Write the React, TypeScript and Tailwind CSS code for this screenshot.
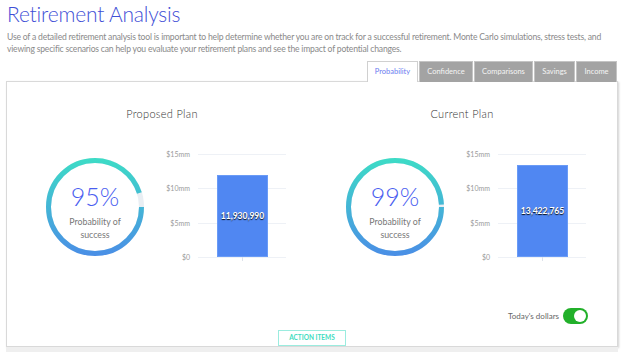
import React from "react";

const TABS = [
  { label: "Probability", w: "w-[51px]", active: true },
  { label: "Confidence", w: "w-[54px]", active: false },
  { label: "Comparisons", w: "w-[59px]", active: false },
  { label: "Savings", w: "w-[41px]", active: false },
  { label: "Income", w: "w-[41px]", active: false },
];

const GRID = [
  { label: "$15mm", top: 8 },
  { label: "$10mm", top: 42 },
  { label: "$5mm", top: 77 },
  { label: "$0", top: 111 },
];

function Ring({ pct, id }: { pct: number; id: string }) {
  const r = 46.5;
  const c = 2 * Math.PI * r;
  return (
    <div className="relative h-[98px] w-[98px]">
      <svg width="98" height="98" viewBox="0 0 98 98" className="absolute inset-0">
        <defs>
          <linearGradient id={id} x1="0" y1="0" x2="0" y2="98" gradientUnits="userSpaceOnUse">
            <stop offset="0" stopColor="#3ddcc6" />
            <stop offset="1" stopColor="#4a8ee6" />
          </linearGradient>
        </defs>
        <circle cx="49" cy="49" r={r} fill="none" stroke="#e9eef3" strokeWidth="5" />
        <circle
          cx="49"
          cy="49"
          r={r}
          fill="none"
          stroke={`url(#${id})`}
          strokeWidth="5"
          strokeDasharray={`${(c * pct) / 100} ${c}`}
        />
      </svg>
      <div className="absolute inset-0 flex flex-col items-center pt-[23px]">
        <div className="text-[25px] font-light leading-[30px] text-[#4a5ef0]">{pct}%</div>
        <div className="mt-[4px] text-center text-[8.8px] leading-[13px] text-[#777]">
          Probability of
          <br />
          success
        </div>
      </div>
    </div>
  );
}

function BarChart({ value, label }: { value: number; label: string }) {
  const h = (value / 15) * 103;
  return (
    <div className="relative h-[120px] w-[130px]">
      {GRID.map((g) => (
        <div key={g.label} className="absolute left-0 flex w-[126px] items-center" style={{ top: g.top - 5 }}>
          <span className="w-[30px] text-right text-[7px] leading-[10px] text-[#9a9a9a]">{g.label}</span>
          <span className="ml-[8px] h-px flex-1 bg-[#eef1f6]" />
        </div>
      ))}
      <div
        className="absolute left-[57px] flex w-[51px] items-center justify-center border border-[#6a9bf6] bg-[#5087f2]"
        style={{ top: 111 - h, height: h }}
      >
        <span className="text-[8.5px] font-bold text-white [text-shadow:0_1px_1px_rgba(0,0,0,0.9)]">{label}</span>
      </div>
      <div className="absolute left-[82px] top-[111px] h-[4px] w-px bg-[#dde2ea]" />
    </div>
  );
}

function PlanColumn({ title, pct, value, label, id }: { title: string; pct: number; value: number; label: string; id: string }) {
  return (
    <div className="flex w-[300px] flex-col">
      <div className="text-center text-[11px] font-light leading-[16px] tracking-[0.3px] text-[#333]">{title}</div>
      <div className="mt-[24px] flex">
        <div className="ml-[34px] mt-[12px]">
          <Ring pct={pct} id={id} />
        </div>
        <div className="ml-[16px]">
          <BarChart value={value} label={label} />
        </div>
      </div>
    </div>
  );
}

export default function App() {
  return (
    <div className="flex h-[352px] w-[624px] flex-col overflow-hidden bg-white font-['Lato',sans-serif]">
      <div className="px-[7px]">
        <h1 className="text-[21px] font-light leading-[28px] tracking-[-0.2px] text-[#3f4fd6]">Retirement Analysis</h1>
        <p className="mt-[3px] whitespace-nowrap text-[8.6px] leading-[12px] tracking-[-0.2px] text-[#8a8a8a]">
          Use of a detailed retirement analysis tool is important to help determine whether you are on track for a successful retirement. Monte Carlo simulations, stress tests, and
          <br />
          viewing specific scenarios can help you evaluate your retirement plans and see the impact of potential changes.
        </p>
      </div>

      <div className="mx-[6px] mt-[6px] flex justify-end gap-px pr-px">
        {TABS.map((t) => (
          <div
            key={t.label}
            className={`${t.w} relative -mb-px flex h-[21px] items-center justify-center text-[7.5px] ${
              t.active
                ? "z-10 border border-b-0 border-[#d0d0d0] bg-white text-[#6b7cf0]"
                : "border border-b-0 border-[#c4c4c4] bg-[#a3a3a3] text-[#f4f4f4]"
            }`}
          >
            {t.label}
          </div>
        ))}
      </div>

      <div className="mx-[6px] flex h-[267px] flex-col border border-[#d9d9d9] bg-white pt-[24px] shadow-[1px_1px_2px_rgba(0,0,0,0.18)]">
        <div className="flex pl-[5px]">
          <PlanColumn title="Proposed Plan" pct={95} value={11.930990} label="11,930,990" id="g1" />
          <PlanColumn title="Current Plan" pct={99} value={13.422765} label="13,422,765" id="g2" />
        </div>
        <div className="mt-[42px] flex items-center justify-end gap-[4px] pr-[29px]">
          <span className="text-[8px] text-[#666]">Today's dollars</span>
          <div className="flex h-[16px] w-[25px] items-center justify-end rounded-full bg-[#22b02a] pr-[2px]">
            <div className="h-[12px] w-[12px] rounded-full bg-white" />
          </div>
        </div>
        <div className="mt-auto flex justify-center">
          <div className="flex h-[16px] w-[68px] items-center justify-center border border-[#9becdf] text-[6.5px] font-bold text-[#3fdcc0]">
            ACTION ITEMS
          </div>
        </div>
      </div>
      <div className="mx-[6px] h-[5px] bg-[#efefef]" />
    </div>
  );
}
